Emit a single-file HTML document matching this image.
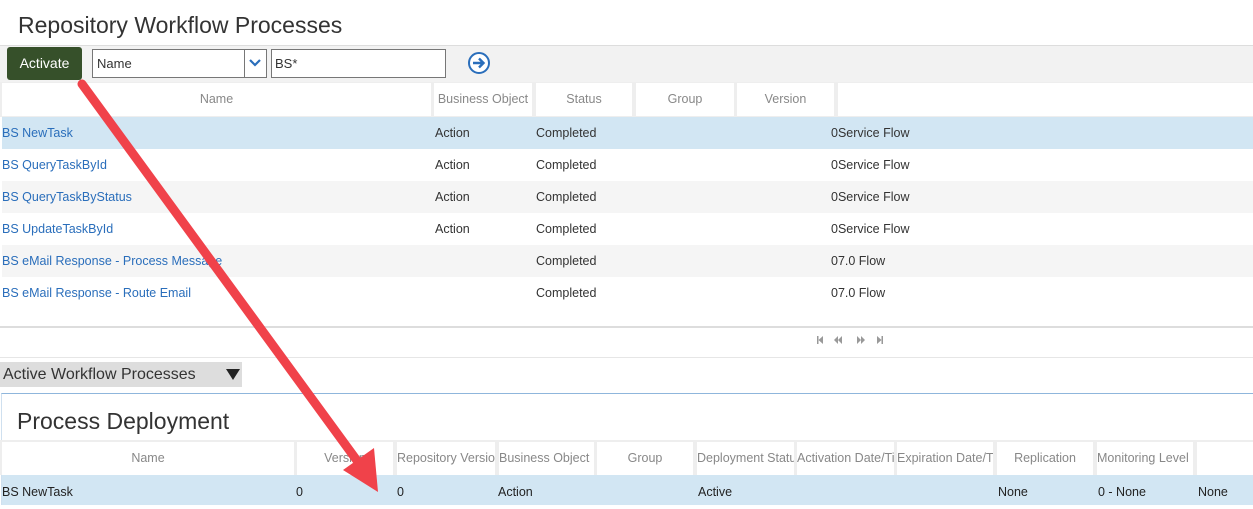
<!DOCTYPE html>
<html><head><meta charset="utf-8"><style>
*{box-sizing:border-box;margin:0;padding:0}
body{width:1253px;height:505px;overflow:hidden;background:#fff;font-family:"Liberation Sans",sans-serif;position:relative;font-size:12px;color:#333}
.abs{position:absolute}
.title{font-size:23px;color:#333;font-weight:normal}
.row{position:absolute;left:2px;right:0;height:32px;line-height:33px;font-size:12.5px}
.row span{position:absolute;top:0}
.lnk{color:#2a6ebb}
.hdr{position:absolute;height:33px;line-height:33px;color:#888;font-size:12.5px;background:#fff;text-align:center;white-space:nowrap;overflow:hidden}
</style></head><body>
<div class="abs title" style="left:18px;top:12px">Repository Workflow Processes</div>
<div class="abs" style="left:0;top:45px;width:1253px;height:37px;background:#f2f2f2;border-top:1px solid #ddd"></div>
<div class="abs" style="left:7px;top:47px;width:75px;height:33px;background:#36502a;border-radius:3px;color:#fff;font-size:14px;line-height:33px;text-align:center">Activate</div>
<div class="abs" style="left:92px;top:49px;width:175px;height:29px;border:1px solid #777;background:#fff;font-size:13px;line-height:28px;padding-left:4px">Name</div>
<div class="abs" style="left:244px;top:49px;width:1px;height:29px;background:#777"></div>
<svg class="abs" style="left:248px;top:58px" width="14" height="10"><path d="M2 2 L7 7 L12 2" stroke="#2a6ebb" stroke-width="2.2" fill="none"/></svg>
<div class="abs" style="left:271px;top:49px;width:175px;height:29px;border:1px solid #777;background:#fff;font-size:13px;line-height:28px;padding-left:3px">BS*</div>
<svg class="abs" style="left:467px;top:51px" width="24" height="24"><circle cx="12" cy="12" r="10" stroke="#2a6ebb" stroke-width="2" fill="#fff"/><path d="M6 12 H16 M12 7.5 L16.5 12 L12 16.5" stroke="#2a6ebb" stroke-width="2.4" fill="none"/></svg>
<div class="abs" style="left:0;top:82px;width:1253px;height:35px;background:#eee"></div>
<div class="hdr" style="left:2px;top:83px;width:429px">Name</div>
<div class="hdr" style="left:434px;top:83px;width:98px">Business Object</div>
<div class="hdr" style="left:536px;top:83px;width:96px">Status</div>
<div class="hdr" style="left:636px;top:83px;width:98px">Group</div>
<div class="hdr" style="left:737px;top:83px;width:97px">Version</div>
<div class="hdr" style="left:838px;top:83px;width:415px"></div>
<div class="row" style="top:117px;background:#d2e6f3"><span class="lnk" style="left:0">BS NewTask</span><span style="left:433px">Action</span><span style="left:534px">Completed</span><span style="left:829px">0Service Flow</span></div>
<div class="row" style="top:149px"><span class="lnk" style="left:0">BS QueryTaskById</span><span style="left:433px">Action</span><span style="left:534px">Completed</span><span style="left:829px">0Service Flow</span></div>
<div class="row" style="top:181px;background:#f5f5f5"><span class="lnk" style="left:0">BS QueryTaskByStatus</span><span style="left:433px">Action</span><span style="left:534px">Completed</span><span style="left:829px">0Service Flow</span></div>
<div class="row" style="top:213px"><span class="lnk" style="left:0">BS UpdateTaskById</span><span style="left:433px">Action</span><span style="left:534px">Completed</span><span style="left:829px">0Service Flow</span></div>
<div class="row" style="top:245px;background:#f5f5f5"><span class="lnk" style="left:0">BS eMail Response - Process Message</span><span style="left:534px">Completed</span><span style="left:829px">07.0 Flow</span></div>
<div class="row" style="top:277px"><span class="lnk" style="left:0">BS eMail Response - Route Email</span><span style="left:534px">Completed</span><span style="left:829px">07.0 Flow</span></div>
<div class="abs" style="left:0;top:326px;width:1253px;height:2px;background:#ddd"></div>
<svg class="abs" style="left:816px;top:336px" width="70" height="8" fill="#999"><path d="M1 0h1.5v8H1zM7 0L2.5 4 7 8z"/><path d="M22 0L18 4 22 8zM26 0L22 4 26 8z"/><path d="M41 0L45 4 41 8zM45 0L49 4 45 8z"/><path d="M61 0L65.5 4 61 8zM65.5 0H67v8h-1.5z"/></svg>
<div class="abs" style="left:0;top:357px;width:1253px;height:1px;background:#e6e6e6"></div>
<div class="abs" style="left:0;top:362px;width:242px;height:25px;background:#ddd;font-size:16px;line-height:25px;padding-left:3px;color:#333">Active Workflow Processes</div>
<svg class="abs" style="left:226px;top:369px" width="14" height="11"><path d="M0 0 H14 L7 11Z" fill="#222"/></svg>
<div class="abs" style="left:1px;top:393px;width:1252px;height:112px;border-top:1.5px solid #8fb6dc;border-left:1px solid #cfe0ef"></div>
<div class="abs title" style="left:17px;top:408px">Process Deployment</div>
<div class="abs" style="left:0;top:440px;width:1253px;height:35px;background:#eee"></div>
<div class="hdr" style="left:2px;top:442px;width:292px">Name</div>
<div class="hdr" style="left:297px;top:442px;width:96px">Version</div>
<div class="hdr" style="left:397px;top:442px;width:98px;text-align:left">Repository Version</div>
<div class="hdr" style="left:499px;top:442px;width:95px;text-align:left">Business Object</div>
<div class="hdr" style="left:597px;top:442px;width:96px">Group</div>
<div class="hdr" style="left:697px;top:442px;width:97px;text-align:left">Deployment Status</div>
<div class="hdr" style="left:797px;top:442px;width:97px;text-align:left">Activation Date/Time</div>
<div class="hdr" style="left:897px;top:442px;width:96px;text-align:left">Expiration Date/Time</div>
<div class="hdr" style="left:997px;top:442px;width:96px">Replication</div>
<div class="hdr" style="left:1097px;top:442px;width:96px;text-align:left">Monitoring Level</div>
<div class="hdr" style="left:1197px;top:442px;width:56px"></div>
<div class="row" style="top:475px;height:30px;line-height:34px;background:#d2e6f3;color:#222"><span style="left:0">BS NewTask</span><span style="left:294px">0</span><span style="left:395px">0</span><span style="left:496px">Action</span><span style="left:696px">Active</span><span style="left:996px">None</span><span style="left:1096px">0 - None</span><span style="left:1196px">None</span></div>
<svg class="abs" style="left:0;top:0" width="1253" height="505"><path d="M82 84 L358 462" stroke="#f0424a" stroke-width="9" stroke-linecap="round"/><path d="M378 492 L343 470 L374 448Z" fill="#f0424a"/></svg>
</body></html>
